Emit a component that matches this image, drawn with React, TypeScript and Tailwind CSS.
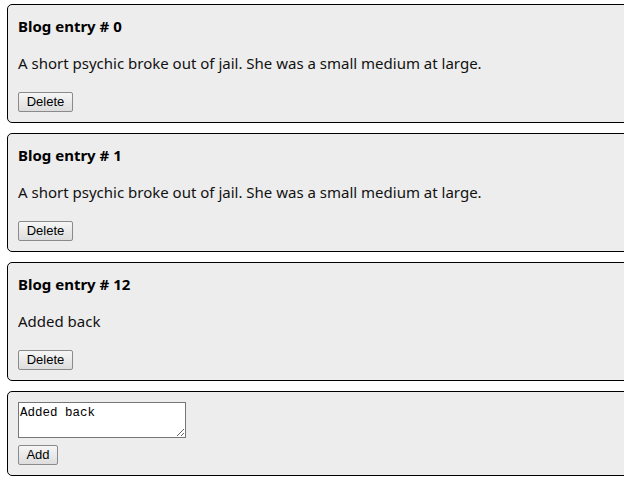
import { useState } from 'react';

interface Entry {
  id: number;
  body: string;
}

const JOKE = 'A short psychic broke out of jail. She was a small medium at large.';

function BlogCard({ entry, onDelete }: { entry: Entry; onDelete: () => void }) {
  return (
    <div className="w-[640px] rounded-[5px] border border-black bg-[#ededed] px-[10px] pt-[11px] pb-[10px]">
      <h3 className="text-[15px] font-bold leading-[20px] text-black">Blog entry # {entry.id}</h3>
      <p className="mt-[15px] text-[15px] leading-[24px] text-[#111]">{entry.body}</p>
      <button
        onClick={onDelete}
        className="mt-[17px] h-[20px] w-[55px] rounded-[2px] border border-[#8a8a8a] bg-gradient-to-b from-[#f6f6f6] to-[#dddddd] font-['Liberation_Sans',Arial,sans-serif] text-[13px] leading-[18px] text-black"
      >
        Delete
      </button>
    </div>
  );
}

export default function App() {
  const [entries, setEntries] = useState<Entry[]>([
    { id: 0, body: JOKE },
    { id: 1, body: JOKE },
    { id: 12, body: 'Added back' },
  ]);
  const [draft, setDraft] = useState('Added back');

  const addEntry = () => {
    if (!draft.trim()) return;
    setEntries([...entries, { id: Math.max(0, ...entries.map(e => e.id)) + 1, body: draft }]);
  };

  return (
    <div className="h-[492px] w-[624px] overflow-hidden bg-white font-['Noto_Sans','Open_Sans',sans-serif]">
      <div className="ml-[7px] mt-[4px] flex flex-col gap-[10px]">
        {entries.map(entry => (
          <BlogCard
            key={entry.id}
            entry={entry}
            onDelete={() => setEntries(entries.filter(e => e.id !== entry.id))}
          />
        ))}
        <div className="w-[640px] rounded-[5px] border border-black bg-[#ededed] p-[10px]">
          <textarea
            value={draft}
            onChange={e => setDraft(e.target.value)}
            className="block h-[36px] w-[168px] border border-[#767676] bg-white px-[1px] pt-[3px] font-['Liberation_Mono','DejaVu_Sans_Mono',monospace] text-[12.5px] leading-[14px] text-black"
          />
          <button
            onClick={addEntry}
            className="mt-[7px] block h-[20px] w-[40px] rounded-[2px] border border-[#8a8a8a] bg-gradient-to-b from-[#f6f6f6] to-[#dddddd] font-['Liberation_Sans',Arial,sans-serif] text-[13px] leading-[18px] text-black"
          >
            Add
          </button>
        </div>
      </div>
    </div>
  );
}
